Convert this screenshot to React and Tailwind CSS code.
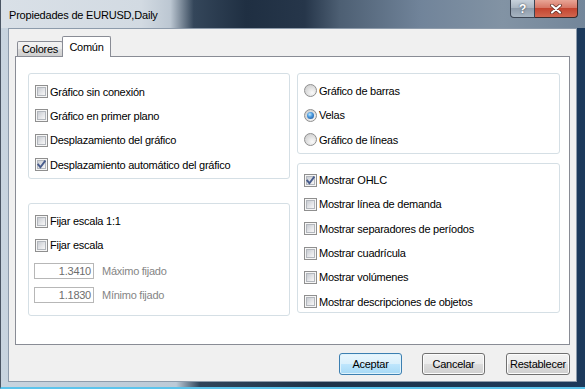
import React from "react";

function Check({ checked }) {
  return (
    <span className="relative block h-[13px] w-[13px] shrink-0 border border-[#8f8f8f] bg-[#f6f6f6] p-[1px]">
      <span className="block h-full w-full border border-[#b3b7bd] bg-[linear-gradient(135deg,#c8ccd2_0%,#e4e5e8_55%,#f7f7f7_100%)]" />
      {checked && (
        <svg viewBox="0 0 11 11" className="absolute left-0 top-0 h-[11px] w-[11px]">
          <path d="M2.3 5.6 L4.4 8.2 L8.8 2.4" fill="none" stroke="#485c8c" strokeWidth="1.9" strokeLinecap="square" />
        </svg>
      )}
    </span>
  );
}

function Radio({ checked }) {
  return (
    <span className="relative flex h-[13px] w-[13px] shrink-0 items-center justify-center rounded-full border border-[#8f8f8f] bg-[radial-gradient(circle_at_65%_70%,#fafafa_0%,#e2e2e2_45%,#c6c6c6_100%)]">
      {checked && (
        <span className="h-[7px] w-[7px] rounded-full bg-[radial-gradient(circle_at_40%_35%,#c4ecfd_0%,#4b9ae0_40%,#154a8c_100%)]" />
      )}
    </span>
  );
}

function CheckRow({ label, checked, h = "h-[24.3px]" }) {
  return (
    <div className={`flex ${h} items-center gap-[2px]`}>
      <Check checked={checked} />
      <span className="leading-[14px] whitespace-nowrap">{label}</span>
    </div>
  );
}

function RadioRow({ label, checked }) {
  return (
    <div className="flex h-[24.5px] items-center gap-[2px]">
      <Radio checked={checked} />
      <span className="leading-[14px] whitespace-nowrap">{label}</span>
    </div>
  );
}

function NumRow({ value, label, className = "" }) {
  return (
    <div className={`flex h-[16px] items-center ${className}`}>
      <div className="-ml-px h-[16px] w-[60px] border border-[#b7b7b7] bg-white pr-[2px] text-right leading-[14px] text-[#6d6d6d]">
        {value}
      </div>
      <span className="ml-[8px] leading-[14px] text-[#858585]">{label}</span>
    </div>
  );
}

function Btn({ children, primary, className = "" }) {
  return (
    <div
      className={`flex h-[22px] items-center justify-center rounded-[3px] border leading-[14px] ${
        primary
          ? "border-[#3c7fb1] bg-[linear-gradient(180deg,#eaf6fd_0%,#d9f0fc_50%,#bee6fd_51%,#a7d9f5_100%)] shadow-[inset_0_0_0_1px_#dff3fc]"
          : "border-[#707070] bg-[linear-gradient(180deg,#f2f2f2_0%,#ebebeb_50%,#dddddd_51%,#cfcfcf_100%)] shadow-[inset_0_0_0_1px_#fcfcfc]"
      } ${className}`}
    >
      {children}
    </div>
  );
}

export default function App() {
  return (
    <div className="flex h-[389px] w-[585px] flex-col overflow-hidden font-['Liberation_Sans',Arial,sans-serif] text-[11px] tracking-[-0.25px] text-black">
      {/* Title bar */}
      <div className="flex h-[28px] shrink-0 items-start border-l border-l-[#4a5563] bg-[linear-gradient(90deg,#d9e0e7_0%,#d2dae2_24%,#bcc7d2_29%,#34465a_33%,#1f2f42_42%,#26364a_52%,#4d5f73_58%,#71849a_72%,#8293a4_86%,#73869a_100%)]">
        <div className="mt-[8px] ml-[8px] flex-1 leading-[14px] tracking-[-0.2px] text-black">
          Propiedades de EURUSD,Daily
        </div>
        <div className="mr-[7px] flex">
          <div className="flex h-[18px] w-[25px] items-center justify-center rounded-bl-[4px] border border-t-0 border-[#3b4553] bg-[linear-gradient(180deg,#c7d1db_0%,#aab6c2_45%,#8e9cab_50%,#a7b4c1_100%)] text-[12px] font-bold leading-none text-white [text-shadow:0_0_2px_#2d3845]">
            ?
          </div>
          <div className="flex h-[18px] w-[43px] items-center justify-center rounded-br-[4px] border border-t-0 border-l-0 border-[#3b2a2a] bg-[linear-gradient(180deg,#e8a596_0%,#d77766_45%,#c44530_50%,#d2664f_100%)]">
            <svg viewBox="0 0 12 10" className="h-[10px] w-[12px]">
              <path d="M2 1.5 L10 8.5 M10 1.5 L2 8.5" stroke="#5a2a22" strokeWidth="3.6" strokeLinecap="round" />
              <path d="M2 1.5 L10 8.5 M10 1.5 L2 8.5" stroke="#ffffff" strokeWidth="2.2" strokeLinecap="round" />
            </svg>
          </div>
        </div>
      </div>

      {/* Frame */}
      <div className="flex flex-1 flex-col border-b-2 border-l border-b-[#5cc4ec] border-l-[#4a5563] bg-[linear-gradient(90deg,#c8d4df_0%,#bccad7_30%,#30455b_34%,#1d3249_55%,#1c3a5c_100%)] pr-[8px] pb-[5px] pl-[7px]">
        <div className="flex h-[354px] w-[569px] flex-col border border-[#8d9bab] bg-[#f0f0f0]">
          {/* Tabs */}
          <div className="mt-[7px] ml-[6px] flex h-[20px] items-end pl-[2px]">
            <div className="flex h-[15px] w-[46px] items-center justify-center rounded-t-[2px] border border-b-0 border-[#898c95] bg-[linear-gradient(180deg,#f3f3f3_0%,#ebebeb_50%,#dcdcdc_51%,#cfcfcf_100%)] pt-[1px] leading-[13px]">
              Colores
            </div>
            <div className="relative z-10 -mb-px -ml-px flex h-[21px] w-[49px] items-center justify-center rounded-t-[2px] border border-b-0 border-[#898c95] bg-white pb-[1px] leading-[14px]">
              Común
            </div>
          </div>

          {/* Panel */}
          <div className="ml-[6px] flex h-[289px] w-[555px] gap-[7px] border border-[#898c95] bg-white pt-[16px] pl-[12px]">
            {/* Left column */}
            <div className="flex w-[262px] flex-col">
              <div className="h-[106px] rounded-[3px] border border-[#d5dfe5] pt-[5.5px] pl-[6px]">
                <CheckRow label="Gráfico sin conexión" />
                <CheckRow label="Gráfico en primer plano" />
                <CheckRow label="Desplazamiento del gráfico" />
                <CheckRow label="Desplazamiento automático del gráfico" checked />
              </div>
              <div className="mt-[24px] h-[113px] rounded-[3px] border border-[#d5dfe5] pt-[5px] pl-[6px]">
                <CheckRow label="Fijar escala 1:1" h="h-[24px]" />
                <CheckRow label="Fijar escala" h="h-[24px]" />
                <NumRow value="1.3410" label="Máximo fijado" className="mt-[6px]" />
                <NumRow value="1.1830" label="Mínimo fijado" className="mt-[8px]" />
              </div>
            </div>

            {/* Right column */}
            <div className="flex w-[263px] flex-col">
              <div className="h-[81px] rounded-[3px] border border-[#d5dfe5] pt-[4.5px] pl-[6px]">
                <RadioRow label="Gráfico de barras" />
                <RadioRow label="Velas" checked />
                <RadioRow label="Gráfico de líneas" />
              </div>
              <div className="mt-[9px] h-[150px] rounded-[3px] border border-[#d5dfe5] pt-[4px] pl-[6px]">
                <CheckRow label="Mostrar OHLC" checked />
                <CheckRow label="Mostrar línea de demanda" />
                <CheckRow label="Mostrar separadores de períodos" />
                <CheckRow label="Mostrar cuadrícula" />
                <CheckRow label="Mostrar volúmenes" />
                <CheckRow label="Mostrar descripciones de objetos" />
              </div>
            </div>
          </div>

          {/* Buttons */}
          <div className="mt-[8px] mr-[6px] flex justify-end">
            <Btn primary className="w-[63px]">Aceptar</Btn>
            <Btn className="ml-[20px] w-[63px]">Cancelar</Btn>
            <Btn className="ml-[21px] w-[64px]">Restablecer</Btn>
          </div>
        </div>
      </div>
    </div>
  );
}
